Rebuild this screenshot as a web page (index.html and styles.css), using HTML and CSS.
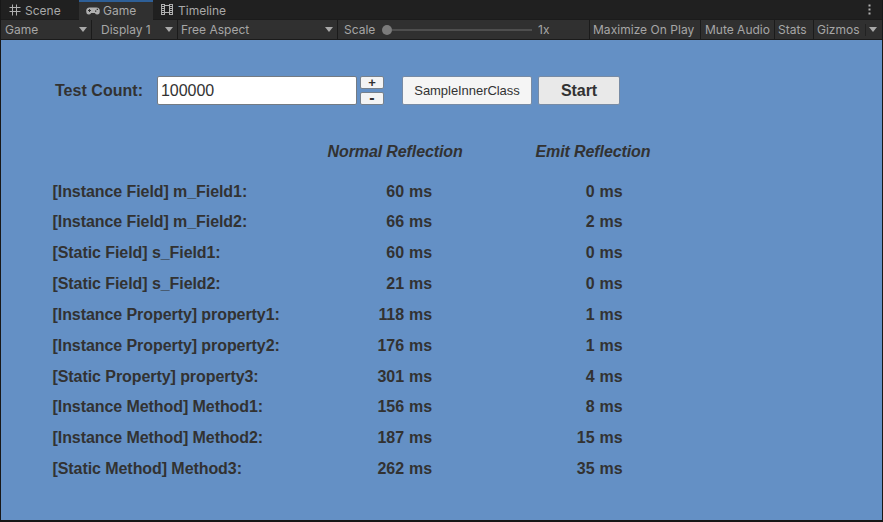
FILE: index.html
```html
<!DOCTYPE html>
<html lang="en">
<head>
<meta charset="utf-8">
<title>Game</title>
<link rel="stylesheet" href="styles.css">
</head>
<body>
<div class="window">
  <nav class="tabs">
    <div class="tab tab-scene"><svg width="12" height="12" viewBox="0 0 12 12"><path d="M3.5 0.5v11M7.5 0.5v11M0.5 3.5h11M0.5 7.5h11"/></svg><span>Scene</span></div>
    <div class="tab tab-game"><svg width="14" height="8" viewBox="0 0 14 8"><path class="solid" fill-rule="evenodd" d="M3.5 0.5h7Q13.8 .7 13.8 4Q13.8 7.5 11.3 7.5Q9.7 7.5 8.8 6H5.2Q4.3 7.5 2.7 7.5Q.2 7.5 .2 4Q.2 .7 3.5 .5ZM3 2v1H2v1h1v1h1v-1h1v-1h-1v-1ZM9 3.5h1.3v1.3h-1.3ZM10.7 1.8h1.3v1.3h-1.3Z"/></svg><span>Game</span></div>
    <div class="tab tab-timeline"><svg width="12" height="12" viewBox="0 0 12 12"><path d="M.5 0v11M3.5 0v11M8.5 0v11M11.5 0v11M3 1.5h6M3 8.5h6"/><path class="holes" d="M2 0v11M10 0v11"/></svg><span>Timeline</span></div>
    <svg class="more" width="3" height="11" viewBox="0 0 3 11"><path class="solid" d="M.5 0.5h2v2h-2zM.5 4.5h2v2h-2zM.5 8.5h2v2h-2z"/></svg>
  </nav>
  <div class="toolbar">
    <div class="item view"><span>Game</span><i class="arrow"></i></div>
    <div class="item display"><span>Display 1</span><i class="arrow"></i></div>
    <div class="item aspect"><span>Free Aspect</span><i class="arrow"></i></div>
    <div class="item scale"><span class="scale-label">Scale</span><i class="knob"></i><i class="track"></i><span class="factor">1x</span></div>
    <div class="item maximize"><span>Maximize On Play</span></div>
    <div class="item mute"><span>Mute Audio</span></div>
    <div class="item stats"><span>Stats</span></div>
    <div class="item gizmos"><span>Gizmos</span><i class="split"></i><i class="arrow"></i></div>
  </div>
  <main class="game">
    <div class="controls">
      <label class="count">Test Count:</label>
      <div class="field">100000</div>
      <div class="stepper"><div class="step">+</div><div class="step minus">-</div></div>
      <div class="button sample">SampleInnerClass</div>
      <div class="button start">Start</div>
    </div>
    <div class="heading"><span></span><span>Normal Reflection</span><span>Emit Reflection</span></div>
    <div class="results">
      <div class="row"><span>[Instance Field] m_Field1:</span><span class="value">60</span><span class="unit">ms</span><span class="value">0</span><span class="unit">ms</span></div>
      <div class="row"><span>[Instance Field] m_Field2:</span><span class="value">66</span><span class="unit">ms</span><span class="value">2</span><span class="unit">ms</span></div>
      <div class="row"><span>[Static Field] s_Field1:</span><span class="value">60</span><span class="unit">ms</span><span class="value">0</span><span class="unit">ms</span></div>
      <div class="row"><span>[Static Field] s_Field2:</span><span class="value">21</span><span class="unit">ms</span><span class="value">0</span><span class="unit">ms</span></div>
      <div class="row"><span>[Instance Property] property1:</span><span class="value">118</span><span class="unit">ms</span><span class="value">1</span><span class="unit">ms</span></div>
      <div class="row"><span>[Instance Property] property2:</span><span class="value">176</span><span class="unit">ms</span><span class="value">1</span><span class="unit">ms</span></div>
      <div class="row"><span>[Static Property] property3:</span><span class="value">301</span><span class="unit">ms</span><span class="value">4</span><span class="unit">ms</span></div>
      <div class="row"><span>[Instance Method] Method1:</span><span class="value">156</span><span class="unit">ms</span><span class="value">8</span><span class="unit">ms</span></div>
      <div class="row"><span>[Instance Method] Method2:</span><span class="value">187</span><span class="unit">ms</span><span class="value">15</span><span class="unit">ms</span></div>
      <div class="row"><span>[Static Method] Method3:</span><span class="value">262</span><span class="unit">ms</span><span class="value">35</span><span class="unit">ms</span></div>
    </div>
  </main>
</div>
</body>
</html>
```
FILE: styles.css
```css
* { box-sizing: border-box; }
body { margin: 0; background: #171717; font-family: "Liberation Sans", Arial, sans-serif; }
.window { width: 883px; height: 522px; padding: 0 1px 2px; display: flex; flex-direction: column; overflow: hidden; }
.tabs { height: 19px; display: flex; background: #202020; color: #a9a9a9; font: 12px/22px Inter, sans-serif; }
.tab { display: flex; height: 19px; white-space: nowrap; }
.tab svg { flex: none; }
svg path { fill: none; stroke: #b0b0b0; stroke-width: 1; }
svg .solid { fill: #b0b0b0; stroke: none; }
svg .holes { stroke-width: 2; stroke-dasharray: 1 1; }
.tab-scene { width: 78px; padding-left: 8px; }
.tab-scene svg { margin: 4px 4px 0 0; }
.tab-game { position: relative; width: 74px; height: 20px; padding-left: 6px; background: #303030; border-top: 2px solid #2e5f97; line-height: 18px; }
.tab-game svg { margin: 5px 3px 0 1px; }
.tab-timeline { padding-left: 8px; }
.tab-timeline svg { margin: 4px 5px 0 0; }
.more { margin: 4px 11px 0 auto; }
.toolbar { height: 21px; display: flex; background: #303030; border-top: 1px solid #1b1b1b; border-bottom: 1px solid #1b1b1b; color: #a6a6a6; font: 12px/20px Inter, sans-serif; }
.item { display: flex; align-items: center; flex: none; padding-left: 4px; border-right: 1px solid #1b1b1b; white-space: nowrap; }
.item:last-child { border-right: 0; }
.item span { position: relative; top: 0.5px; }
.view { width: 91px; }
.display { width: 86px; padding-left: 9px; }
.aspect { width: 160px; padding-left: 3px; }
.scale { width: 252px; padding-left: 6px; }
.scale-label { width: 38px; }
.maximize { width: 111px; padding-left: 3px; letter-spacing: 0.03px; }
.mute { width: 74px; }
.stats { width: 39px; padding-left: 3px; }
.gizmos { width: 68px; padding-left: 3px; }
.arrow { width: 0; height: 0; margin: 0 4px 0 auto; border: 4px solid transparent; border-top: 5px solid #a9a9a9; border-bottom: 0; }
.gizmos .arrow { margin-right: 5px; }
.split { width: 1px; height: 12px; margin-left: 5px; background: #222; }
.knob { width: 10px; height: 10px; border-radius: 50%; background: #7b7b7b; }
.track { width: 140px; height: 2px; background: #4e4e4e; }
.factor { margin-left: 6px; }
.game { flex: 1; background: #6490c5; color: #323232; font-size: 16px; letter-spacing: -0.05px; font-weight: bold; overflow: hidden; }
.controls { display: flex; height: 29px; margin: 36px 0 0 54px; line-height: 30px; }
.count { width: 102px; letter-spacing: 0.03px; white-space: nowrap; }
.field { width: 200px; margin-right: 3px; padding-left: 3px; border: 1px solid #747b83; border-radius: 2px; background: #fff; font-weight: normal; line-height: 28px; }
.stepper { width: 24px; display: flex; flex-direction: column; justify-content: space-between; }
.step { height: 13px; border: 1px solid #77818c; border-radius: 2px; background: #f4f4f4; text-align: center; font-size: 13px; line-height: 11px; }
.minus { font-size: 16px; line-height: 10px; }
.button { border: 1px solid #778ba5; border-radius: 2px; text-align: center; line-height: 28px; }
.sample { width: 130px; margin: 0 6px 0 18px; background: #f5f5f5; font-size: 13px; font-weight: normal; }
.start { width: 82px; background: #e9e9e9; }
.heading { display: grid; grid-template-columns: 275px 208px auto; margin: 37px 0 0 51.5px; line-height: 20px; font-style: italic; letter-spacing: -0.1px; white-space: nowrap; }
.results { margin: 14.6px 0 0 51.5px; }
.row { display: grid; grid-template-columns: 280px 71.5px 134.5px 56px auto; height: 30.83px; line-height: 30.83px; letter-spacing: -0.07px; white-space: nowrap; }
.value { text-align: right; }
.unit { padding-left: 5px; }
```
